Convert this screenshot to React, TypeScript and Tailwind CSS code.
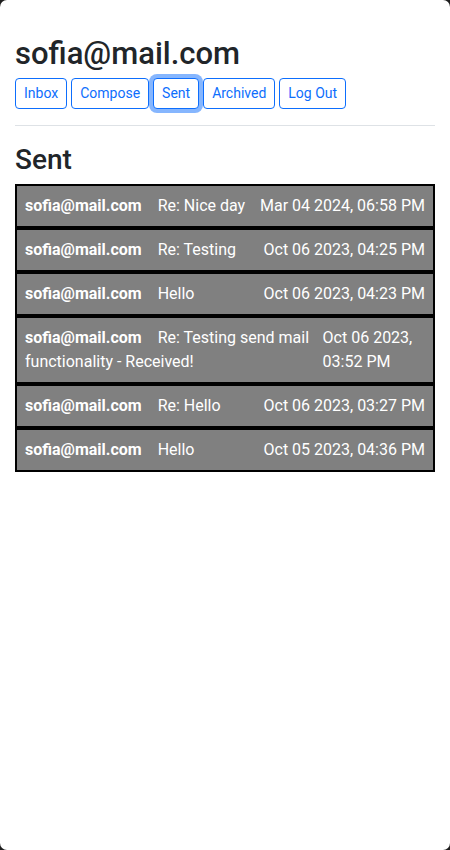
import React from "react";

const rows = [
  { subject: "Re: Nice day", date: "Mar 04 2024, 06:58 PM" },
  { subject: "Re: Testing", date: "Oct 06 2023, 04:25 PM" },
  { subject: "Hello", date: "Oct 06 2023, 04:23 PM" },
  { subject: "Re: Testing send mail functionality - Received!", date: "Oct 06 2023, 03:52 PM" },
  { subject: "Re: Hello", date: "Oct 06 2023, 03:27 PM" },
  { subject: "Hello", date: "Oct 05 2023, 04:36 PM" },
];

export default function App() {
  return (
    <div className="bg-[#1e1e1e]">
      <div
        className="min-h-[850px] rounded-[7px] bg-white px-[15px] pt-[37px] text-[#212529]"
        style={{ fontFamily: 'Roboto, "Noto Sans", sans-serif' }}
      >
        <h1 className="mb-2 text-[31px] font-medium leading-[33px]">sofia@mail.com</h1>
        <div className="flex gap-1">
          {["Inbox", "Compose", "Sent", "Archived", "Log Out"].map((b) => (
            <button
              key={b}
              className={
                "rounded-[4px] border border-[#0d6efd] bg-white px-2 py-1 text-[14px] leading-[21px] text-[#0d6efd] " +
                (b === "Sent" ? "relative z-10 shadow-[0_0_0_4px_rgba(13,110,253,0.5)]" : "")
              }
            >
              {b}
            </button>
          ))}
        </div>
        <hr className="mb-[17px] mt-4 border-t border-[#dee2e6]" />
        <h2 className="mb-2 text-[28px] font-medium leading-[33px]">Sent</h2>
        <div>
          {rows.map((r, i) => (
            <div
              key={i}
              className="flex justify-between border-2 border-black bg-[#808080] px-2 py-2 text-[16px] leading-6 text-white"
            >
              <div>
                <span className="font-bold">sofia@mail.com</span> <span className="ml-3">{r.subject}</span>
              </div>
              <div className="ml-2">{r.date}</div>
            </div>
          ))}
        </div>
      </div>
    </div>
  );
}
